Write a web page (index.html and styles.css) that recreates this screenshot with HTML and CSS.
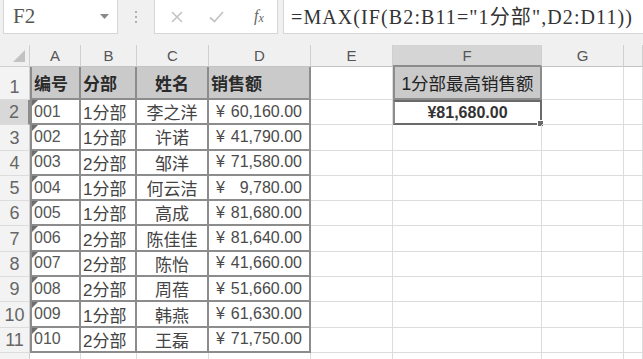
FILE: index.html
```html
<!DOCTYPE html>
<html lang="zh">
<head>
  <meta charset="UTF-8">
  <title>1分部最高销售额</title>
  <link rel="stylesheet" href="styles.css">
</head>
<body>
  <div class="toolbar">
    <div class="name-box">
      <span class="cell-ref">F2</span>
      <svg class="drop" width="9" height="5" viewBox="0 0 9 5"><path d="M0 0h9L4.5 5z" fill="#8a8a8a"/></svg>
    </div>
    <div class="grip"><i></i><i></i><i></i></div>
    <div class="fx-buttons">
      <svg class="btn-x" width="12" height="12" viewBox="0 0 12 12"><path d="M1 1l10 10M11 1L1 11" stroke="#c4c4c4" stroke-width="1.6"/></svg>
      <svg class="btn-ok" width="15" height="12" viewBox="0 0 15 12"><path d="M1 6.5l4.5 4L14 1" stroke="#c4c4c4" stroke-width="1.8" fill="none"/></svg>
      <span class="fx">f<sub>x</sub></span>
    </div>
    <div class="formula">=MAX(IF(B2:B11="1分部",D2:D11))</div>
  </div>

  <div class="sheet"></div>

  <script>
    const sheet = document.querySelector('.sheet');
    const letters = ['A', 'B', 'C', 'D', 'E', 'F', 'G', ''];
    const rows = [
      ['001', '1分部', '李之洋', '60,160.00'],
      ['002', '1分部', '许诺', '41,790.00'],
      ['003', '2分部', '邹洋', '71,580.00'],
      ['004', '1分部', '何云洁', '9,780.00'],
      ['005', '1分部', '高成', '81,680.00'],
      ['006', '2分部', '陈佳佳', '81,640.00'],
      ['007', '2分部', '陈怡', '41,660.00'],
      ['008', '2分部', '周蓓', '51,660.00'],
      ['009', '1分部', '韩燕', '61,630.00'],
      ['010', '2分部', '王磊', '71,750.00']
    ];

    function addCell(className, html) {
      const cell = document.createElement('div');
      cell.className = 'cell ' + className;
      if (html) cell.innerHTML = html;
      sheet.appendChild(cell);
      return cell;
    }

    // column headers
    addCell('corner');
    letters.forEach(letter => {
      addCell('col-head' + (letter === 'F' ? ' selected' : ''), letter);
    });

    // row 1
    addCell('row-head', '1');
    addCell('t head first', '编号');
    addCell('t head', '分部');
    addCell('t head center', '姓名');
    addCell('t head', '销售额');
    addCell('');
    addCell('t head center first wide', '1分部最高销售额');
    addCell('');
    addCell('');

    rows.forEach((row, i) => {
      addCell('row-head' + (i === 0 ? ' selected' : ''), i + 2);
      addCell('t first text-num', row[0]);
      addCell('t', row[1]);
      addCell('t center', row[2]);
      addCell('t money', '<span>¥</span><span>' + row[3] + '</span>');
      addCell('');
      if (i === 0) {
        addCell('t center first active', '¥81,680.00');
      } else {
        addCell('');
      }
      addCell('');
      addCell('');
    });

    // top of row 12, cut by the window
    addCell('row-head');
    for (let i = 0; i < 8; i++) addCell('');
  </script>
</body>
</html>
```

FILE: styles.css
```css
body {
  margin: 0;
  font-family: "Liberation Sans", "Noto Sans CJK SC", sans-serif;
  background-color: #fff;
  overflow: hidden;
}

.toolbar {
  display: flex;
  height: 34px;
  padding: 0 0 11px 3px;
  background-color: #f0f0f0;
}

.name-box {
  width: 115px;
  box-sizing: border-box;
  display: flex;
  align-items: center;
  justify-content: space-between;
  padding: 0 8px 0 9px;
  background-color: #fff;
  border: 1px solid #d6d6d6;
  border-top: none;
}

.cell-ref {
  font-family: "Liberation Serif", serif;
  font-size: 21px;
  color: #555;
}

.grip {
  width: 36px;
  display: flex;
  flex-direction: column;
  align-items: center;
  justify-content: center;
  gap: 3px;
}

.grip i {
  width: 2px;
  height: 2px;
  background-color: #b0b0b0;
}

.fx-buttons {
  width: 124px;
  box-sizing: border-box;
  display: flex;
  align-items: center;
  padding: 0 0 0 16px;
  background-color: #fff;
  border: 1px solid #d6d6d6;
  border-top: none;
}

.btn-ok {
  margin-left: 26px;
}

.fx {
  margin-left: 30px;
  font-family: "Liberation Serif", serif;
  font-style: italic;
  font-size: 16px;
  color: #666;
}

.fx sub {
  font-size: 12px;
  vertical-align: -1px;
}

.formula {
  flex: 1;
  margin-left: 5px;
  padding-left: 7px;
  background-color: #fff;
  border: 1px solid #d6d6d6;
  border-top: none;
  border-right: none;
  font-family: "Liberation Serif", "Noto Sans CJK SC", serif;
  font-size: 20px;
  letter-spacing: 1.1px;
  line-height: 34px;
  color: #333;
  white-space: nowrap;
}

.sheet {
  display: grid;
  grid-template-columns: 30px 51px 56px 72px 102px 82px 149px 82px 1fr;
  grid-template-rows: 22px 33px repeat(11, 25.3px);
}

.cell {
  position: relative;
  box-sizing: border-box;
  display: flex;
  align-items: center;
  padding: 0 2px;
  border-right: 1px solid #dcdcdc;
  border-bottom: 1px solid #dcdcdc;
  font-size: 17px;
  color: #444;
  white-space: nowrap;
}

.corner {
  background-color: #f0f0f0;
  border-color: #cfcfcf;
}

.corner::after {
  content: "";
  position: absolute;
  right: 4px;
  bottom: 4px;
  border-left: 12px solid transparent;
  border-bottom: 12px solid #c2c2c2;
}

.col-head {
  justify-content: center;
  background-color: #f0f0f0;
  border-right-color: #cfcfcf;
  border-bottom-color: #c4c4c4;
  font-size: 15px;
  color: #555;
}

.col-head.selected {
  background-color: #d5d5d5;
  border-bottom: 2px solid #8c8c8c;
}

.row-head {
  justify-content: center;
  align-items: flex-end;
  padding-bottom: 1px;
  background-color: #f3f3f3;
  border-right-color: #cfcfcf;
  font-size: 18px;
  color: #666;
}

.row-head.selected {
  background-color: #d8d8d8;
  border-right: 2px solid #8c8c8c;
}

.t {
  border-right: 2px solid #8c8c8c;
  border-bottom: 2px solid #8c8c8c;
}

.t.first {
  border-left: 2px solid #8c8c8c;
}

.t.head {
  background-color: #cacaca;
  color: #2a2a2a;
  font-weight: bold;
  font-size: 17px;
}

.t.wide {
  font-size: 17.5px;
  font-weight: normal;
  color: #222;
}

.center {
  justify-content: center;
}

.text-num {
  font-size: 16px;
  color: #555;
}

.text-num::before {
  content: "";
  position: absolute;
  left: 0;
  top: 0;
  border-top: 6px solid #6e6e6e;
  border-right: 6px solid transparent;
}

.money {
  justify-content: space-between;
  padding: 0 7px 0 7px;
  font-size: 16px;
  color: #4a4a4a;
}

.active {
  border: 2px solid #6a6a6a;
  font-weight: bold;
  font-size: 16px;
  color: #333;
}

.active::after {
  content: "";
  position: absolute;
  right: -4px;
  bottom: -4px;
  width: 5px;
  height: 5px;
  background-color: #6a6a6a;
  border: 1px solid #fff;
}
```
